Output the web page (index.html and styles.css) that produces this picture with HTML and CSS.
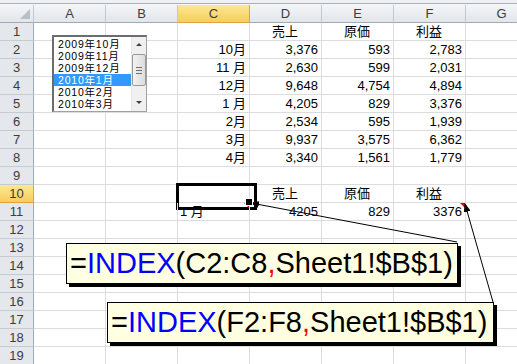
FILE: index.html
```html
<!DOCTYPE html>
<html lang="ja">
<head>
    <meta charset="UTF-8">
    <title>INDEX</title>
<link rel="stylesheet" href="styles.css">
</head>
<body>
    <div class="topbar"></div>
    <div class="sheet">
        <div class="row head">
            <div class="corner"></div><div>A</div><div>B</div><div class="sel">C</div><div>D</div><div>E</div><div>F</div><div>G</div>
        </div>
        <div class="row"><div class="rh">1</div><div></div><div></div><div></div><div class="ctr">売上</div><div class="ctr">原価</div><div class="ctr">利益</div><div></div></div>
        <div class="row"><div class="rh">2</div><div></div><div></div><div class="num">10月</div><div class="num">3,376</div><div class="num">593</div><div class="num">2,783</div><div></div></div>
        <div class="row"><div class="rh">3</div><div></div><div></div><div class="num">11 月</div><div class="num">2,630</div><div class="num">599</div><div class="num">2,031</div><div></div></div>
        <div class="row"><div class="rh">4</div><div></div><div></div><div class="num">12月</div><div class="num">9,648</div><div class="num">4,754</div><div class="num">4,894</div><div></div></div>
        <div class="row"><div class="rh">5</div><div></div><div></div><div class="num">1 月</div><div class="num">4,205</div><div class="num">829</div><div class="num">3,376</div><div></div></div>
        <div class="row"><div class="rh">6</div><div></div><div></div><div class="num">2月</div><div class="num">2,534</div><div class="num">595</div><div class="num">1,939</div><div></div></div>
        <div class="row"><div class="rh">7</div><div></div><div></div><div class="num">3月</div><div class="num">9,937</div><div class="num">3,575</div><div class="num">6,362</div><div></div></div>
        <div class="row"><div class="rh">8</div><div></div><div></div><div class="num">4月</div><div class="num">3,340</div><div class="num">1,561</div><div class="num">1,779</div><div></div></div>
        <div class="row"><div class="rh">9</div><div></div><div></div><div></div><div></div><div></div><div></div><div></div></div>
        <div class="row"><div class="rh sel">10</div><div></div><div></div><div class="active"></div><div class="ctr">売上</div><div class="ctr">原価</div><div class="ctr">利益</div><div></div></div>
        <div class="row"><div class="rh">11</div><div></div><div></div><div class="memo">1 月</div><div class="num">4205</div><div class="num">829</div><div class="num memo">3376</div><div></div></div>
        <div class="row"><div class="rh">12</div><div></div><div></div><div></div><div></div><div></div><div></div><div></div></div>
        <div class="row"><div class="rh">13</div><div></div><div></div><div></div><div></div><div></div><div></div><div></div></div>
        <div class="row"><div class="rh">14</div><div></div><div></div><div></div><div></div><div></div><div></div><div></div></div>
        <div class="row"><div class="rh">15</div><div></div><div></div><div></div><div></div><div></div><div></div><div></div></div>
        <div class="row"><div class="rh">16</div><div></div><div></div><div></div><div></div><div></div><div></div><div></div></div>
        <div class="row"><div class="rh">17</div><div></div><div></div><div></div><div></div><div></div><div></div><div></div></div>
        <div class="row"><div class="rh">18</div><div></div><div></div><div></div><div></div><div></div><div></div><div></div></div>
        <div class="row"><div class="rh">19</div><div></div><div></div><div></div><div></div><div></div><div></div><div></div></div>
    </div>

    <!-- リストボックス (フォームコントロール) -->
    <div class="listbox">
        <ul class="items">
            <li>2009年10月</li>
            <li>2009年11月</li>
            <li>2009年12月</li>
            <li class="picked">2010年1月</li>
            <li>2010年2月</li>
            <li>2010年3月</li>
        </ul>
        <div class="scroll">
            <span class="arrow up"></span>
            <span class="thumb"></span>
            <span class="arrow down"></span>
        </div>
    </div>

    <div class="callout callout-1">=<span class="fn">INDEX</span>(C2:C8<span class="sep">,</span>Sheet1!$B$1)</div>
    <div class="callout callout-2">=<span class="fn">INDEX</span>(F2:F8<span class="sep">,</span>Sheet1!$B$1)</div>

    <svg class="arrows" width="517" height="364" viewBox="0 0 517 364">
        <defs>
            <marker id="head" markerWidth="9" markerHeight="7" refX="8" refY="3.5" orient="auto" markerUnits="userSpaceOnUse">
                <path d="M0,0 L9,3.5 L0,7 z" fill="#000"/>
            </marker>
        </defs>
        <line x1="457" y1="242" x2="251" y2="203" stroke="#000" stroke-width="1" marker-end="url(#head)"/>
        <line x1="493" y1="302" x2="465" y2="204" stroke="#000" stroke-width="1" marker-end="url(#head)"/>
    </svg>
</body>
</html>
```

FILE: styles.css
```css
*{
    margin: 0;
    padding: 0;
    box-sizing: border-box;
}
html,body{
    width: 517px;
    height: 364px;
    overflow: hidden;
    background: #fff;
}
body{
    position: relative;
    font-family: "Liberation Sans", "Noto Sans CJK JP", sans-serif;
    font-size: 13px;
    color: #000;
}
.topbar{
    height: 5px;
    background: linear-gradient(#eef0f3 0 3px, #a7b0bb 3px 4px, #f4f5f7 4px);
}

/* シート */
.row{
    display: grid;
    grid-template-columns: 34px repeat(7, 72px);
    height: 18px;
}
.row>div{
    position: relative;
    display: flex;
    align-items: flex-end;
    padding: 0 3px 1px 2px;
    line-height: 15px;
    white-space: nowrap;
    border-right: 1px solid #dadcdd;
    border-bottom: 1px solid #dadcdd;
}
.row>.num{ justify-content: flex-end; }
.row>.ctr{ justify-content: center; }

.head>div{
    justify-content: center;
    align-items: center;
    padding: 0;
    color: #3c3c3c;
    background: linear-gradient(#f4f5f7, #e2e5e9);
    border-right-color: #c3c8cf;
    border-bottom-color: #9eabbb;
}
.row>.rh{
    justify-content: center;
    align-items: center;
    padding: 0;
    color: #3c3c3c;
    background: #e4e7eb;
    border-right-color: #9eabbb;
    border-bottom-color: #c6cbd1;
}
.row>.sel{
    background: linear-gradient(#fde896, #f7cd58);
    border-right-color: #e2a23c;
    border-bottom-color: #e2a23c;
}
.corner::after{
    content: "";
    position: absolute;
    right: 3px;
    bottom: 3px;
    border-left: 10px solid transparent;
    border-bottom: 10px solid #b9bfc7;
}

/* アクティブセル */
.active::after{
    content: "";
    position: absolute;
    left: -2px;
    top: -2px;
    width: 75px;
    height: 21px;
    border: 3px solid #000;
}
.active::before{
    content: "";
    position: absolute;
    right: -4px;
    bottom: -4px;
    width: 6px;
    height: 6px;
    background: #000;
    border: 1px solid #fff;
    z-index: 2;
}
/* コメントの赤い三角 */
.memo::before{
    content: "";
    position: absolute;
    right: 0;
    top: 0;
    border-left: 5px solid transparent;
    border-top: 5px solid #e80000;
}

/* リストボックス */
.listbox{
    position: absolute;
    left: 52px;
    top: 35px;
    width: 95px;
    height: 77px;
    display: flex;
    background: #fff;
    border-style: solid;
    border-width: 2px 1px 1px 2px;
    border-color: #6d6d6d #a0a0a0 #a0a0a0 #6d6d6d;
}
.items{
    list-style: none;
    flex: 1;
    padding-top: 1px;
}
.items li{
    height: 12px;
    line-height: 12px;
    padding-left: 4px;
    font-size: 10.5px;
    letter-spacing: 0.8px;
    white-space: nowrap;
    overflow: hidden;
}
.items li.picked{
    background: #3399ff;
    color: #fff;
}
.scroll{
    width: 15px;
    display: flex;
    flex-direction: column;
    align-items: center;
    background: #f0f0f0;
    border-left: 1px solid #e6e6e6;
}
.arrow{
    width: 0;
    height: 0;
    border-left: 3px solid transparent;
    border-right: 3px solid transparent;
}
.arrow.up{
    margin-top: 6px;
    border-bottom: 3px solid #404040;
}
.arrow.down{
    margin-top: auto;
    margin-bottom: 7px;
    border-top: 3px solid #404040;
}
.thumb{
    margin-top: 8px;
    width: 14px;
    height: 32px;
    border: 1px solid #9a9a9a;
    border-radius: 2px;
    background:
        linear-gradient(#707070, #707070) center 12px / 6px 1px no-repeat,
        linear-gradient(#707070, #707070) center 15px / 6px 1px no-repeat,
        linear-gradient(#707070, #707070) center 18px / 6px 1px no-repeat,
        linear-gradient(90deg, #f2f2f2, #dcdcdc);
}

/* 吹き出し */
.callout{
    position: absolute;
    height: 41px;
    padding-left: 3px;
    background: #ffffe1;
    border: 1px solid #000;
    box-shadow: 3px 3px 0 #000;
    font-size: 29px;
    line-height: 38px;
    white-space: nowrap;
}
.callout-1{
    left: 66px;
    top: 243px;
    width: 392px;
}
.callout-2{
    left: 107px;
    top: 302px;
    width: 387px;
}
.fn{ color: #0000ff; }
.sep{ color: #ff0000; }

.arrows{
    position: absolute;
    left: 0;
    top: 0;
    pointer-events: none;
}
```
